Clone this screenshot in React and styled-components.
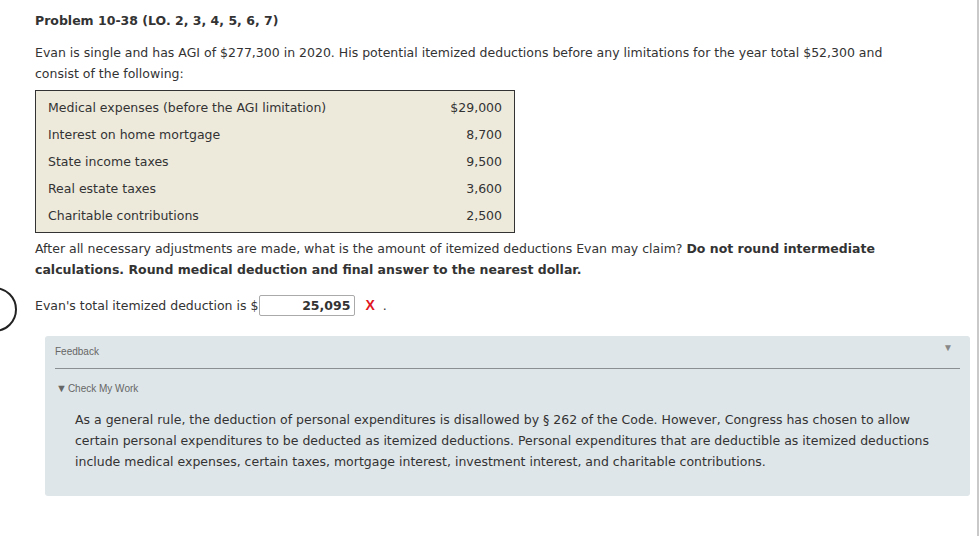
import styled, { createGlobalStyle } from "styled-components";

const GlobalStyle = createGlobalStyle`
  html, body {
    margin: 0;
    padding: 0;
    background: #fff;
  }
  body {
    font-family: "DejaVu Sans", Verdana, sans-serif;
    font-size: 12.5px;
    color: #333;
  }
`;

const Page = styled.div`
  position: relative;
  width: 979px;
  height: 536px;
  overflow: hidden;
  box-sizing: border-box;
  padding: 12px 0 0 35px;
  border-right: 2px solid #c9c9c9;
`;

const Title = styled.h1`
  margin: 0;
  font-size: 12.5px;
  font-weight: bold;
  line-height: 18px;
`;

const Para = styled.p`
  margin: ${({ $top }) => $top || 0}px 0 0;
  width: ${({ $width }) => $width || 880}px;
  line-height: 21px;
`;

const Table = styled.div`
  margin-top: 6px;
  width: 480px;
  box-sizing: border-box;
  border: 1px solid #333;
  background: #edeadc;
  padding: 3px 12px 3px 12px;
`;

const Row = styled.div`
  display: flex;
  justify-content: space-between;
  height: 27px;
  align-items: center;
`;

const AnswerLine = styled.div`
  display: flex;
  align-items: center;
  margin-top: 14px;
  height: 22px;
`;

const Input = styled.div`
  width: 96px;
  height: 21px;
  box-sizing: border-box;
  border: 1px solid #aaa;
  border-radius: 2px;
  margin-left: 1px;
  padding-right: 4px;
  text-align: right;
  font-weight: bold;
  line-height: 19px;
`;

const Wrong = styled.span`
  color: #e0171f;
  font-weight: bold;
  font-family: "Liberation Sans", Arial, sans-serif;
  font-size: 14px;
  margin-left: 10px;
`;

const Dot = styled.span`
  margin-left: 8px;
`;

const Circle = styled.div`
  position: absolute;
  left: -28px;
  top: 287px;
  width: 41px;
  height: 41px;
  border: 2.5px solid #222;
  border-radius: 50%;
`;

const Feedback = styled.section`
  margin: 20px 0 0 10px;
  width: 925px;
  height: 160px;
  box-sizing: border-box;
  background: #dfe6e9;
  border-radius: 3px;
  padding: 6px 10px 0 10px;
`;

const FeedHead = styled.div`
  display: flex;
  justify-content: space-between;
  align-items: flex-start;
  padding: 4px 0 10px;
  line-height: 12px;
  border-bottom: 1px solid #8a8f92;
  font-family: "Liberation Sans", Arial, sans-serif;
  font-size: 10px;
  color: #666;
`;

const Caret = styled.span`
  font-size: 10px;
  color: #888;
  margin: -4px 7px 0 0;
`;

const Check = styled.div`
  margin: 13px 0 0 1px;
  line-height: 12px;
  font-family: "Liberation Sans", Arial, sans-serif;
  font-size: 10px;
  color: #666;
`;

const Arrow = styled.span`
  color: #666;
  font-size: 11px;
  margin-right: 1px;
`;

const Explanation = styled.p`
  margin: 14px 0 0 20px;
  line-height: 21px;
  width: 875px;
`;

const rows = [
  ["Medical expenses (before the AGI limitation)", "$29,000"],
  ["Interest on home mortgage", "8,700"],
  ["State income taxes", "9,500"],
  ["Real estate taxes", "3,600"],
  ["Charitable contributions", "2,500"],
];

export default function App() {
  return (
    <>
      <GlobalStyle />
      <Page>
        <Title>Problem 10-38 (LO. 2, 3, 4, 5, 6, 7)</Title>
        <Para $top={12}>
          Evan is single and has AGI of $277,300 in 2020. His potential itemized deductions before any
          limitations for the year total $52,300 and consist of the following:
        </Para>
        <Table>
          {rows.map(([label, value]) => (
            <Row key={label}>
              <span>{label}</span>
              <span>{value}</span>
            </Row>
          ))}
        </Table>
        <Para $top={5} $width={840}>
          After all necessary adjustments are made, what is the amount of itemized deductions Evan may
          claim? <b>Do not round intermediate calculations. Round medical deduction and final answer to
          the nearest dollar.</b>
        </Para>
        <AnswerLine>
          <span>Evan's total itemized deduction is $</span>
          <Input>25,095</Input>
          <Wrong>X</Wrong>
          <Dot>.</Dot>
        </AnswerLine>
        <Circle />
        <Feedback>
          <FeedHead>
            <span>Feedback</span>
            <Caret>▼</Caret>
          </FeedHead>
          <Check>
            <Arrow>▼</Arrow>Check My Work
          </Check>
          <Explanation>
            As a general rule, the deduction of personal expenditures is disallowed by § 262 of the Code.
            However, Congress has chosen to allow certain personal expenditures to be deducted as itemized
            deductions. Personal expenditures that are deductible as itemized deductions include medical
            expenses, certain taxes, mortgage interest, investment interest, and charitable contributions.
          </Explanation>
        </Feedback>
      </Page>
    </>
  );
}
